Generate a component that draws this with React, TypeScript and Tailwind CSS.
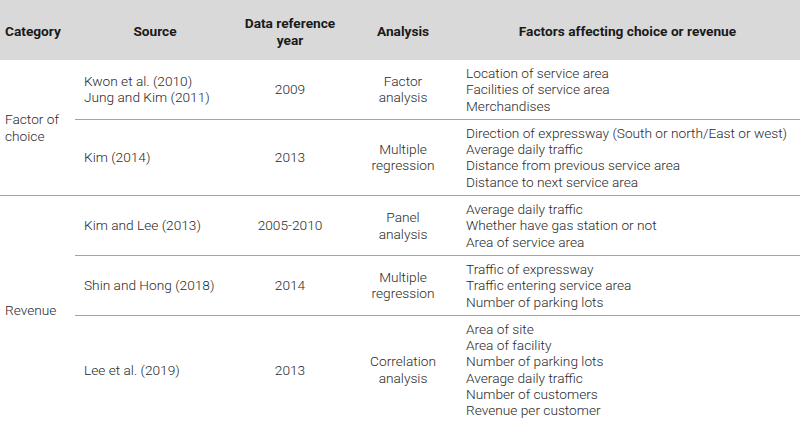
import React from 'react'

const groups = [
    {
        category: ["Factor of", "choice"],
        rows: [
            { source: ["Kwon et al. (2010)", "Jung and Kim (2011)"], year: "2009", analysis: ["Factor", "analysis"], factors: ["Location of service area", "Facilities of service area", "Merchandises"] },
            { source: ["Kim (2014)"], year: "2013", analysis: ["Multiple", "regression"], factors: ["Direction of expressway (South or north/East or west)", "Average daily traffic", "Distance from previous service area", "Distance to next service area"] },
        ],
    },
    {
        category: ["Revenue"],
        rows: [
            { source: ["Kim and Lee (2013)"], year: "2005-2010", analysis: ["Panel", "analysis"], factors: ["Average daily traffic", "Whether have gas station or not", "Area of service area"] },
            { source: ["Shin and Hong (2018)"], year: "2014", analysis: ["Multiple", "regression"], factors: ["Traffic of expressway", "Traffic entering service area", "Number of parking lots"] },
            { source: ["Lee et al. (2019)"], year: "2013", analysis: ["Correlation", "analysis"], factors: ["Area of site", "Area of facility", "Number of parking lots", "Average daily traffic", "Number of customers", "Revenue per customer"] },
        ],
    },
]

function Lines({ items }: { items: string[] }) {
    return <>{items.map((t, i) => <div key={i}>{t}</div>)}</>
}

export default function App() {
    return (
        <div className="w-[800px] h-[422px] bg-white font-['Roboto',sans-serif] text-[13.7px] leading-[16.3px]">
            <table className="w-full border-collapse table-fixed">
                <colgroup>
                    <col className="w-[75px]" />
                    <col className="w-[160px]" />
                    <col className="w-[110px]" />
                    <col className="w-[116px]" />
                    <col />
                </colgroup>
                <thead>
                    <tr className="bg-[#d9d9d9] h-[60px] font-bold text-[#1a1a1a] leading-[17px]">
                        <th className="text-left pl-[5px] pt-[2px] font-bold">Category</th>
                        <th className="text-center pt-[2px] font-bold">Source</th>
                        <th className="text-center pt-[3px] font-bold">Data reference<br />year</th>
                        <th className="text-center pt-[2px] font-bold">Analysis</th>
                        <th className="text-center pt-[2px] font-bold pr-[6px]">Factors affecting choice or revenue</th>
                    </tr>
                </thead>
                <tbody className="font-light text-[#2a2a2a]">
                    {groups.map((g, gi) =>
                        g.rows.map((r, ri) => {
                            const last = ri === g.rows.length - 1
                            const lastAll = last && gi === groups.length - 1
                            const border = lastAll
                                ? "border-b-[1.5px] border-[#333]"
                                : "border-b border-[#a3a3a3]"
                            return (
                                <tr key={gi + "-" + ri}>
                                    {ri === 0 && (
                                        <td
                                            rowSpan={g.rows.length}
                                            className={"pl-[5px] align-middle " + (gi === groups.length - 1 ? "border-b-[1.5px] border-[#333]" : "border-b border-[#a3a3a3]")}
                                        >
                                            <Lines items={g.category} />
                                        </td>
                                    )}
                                    <td className={"pl-[9px] py-[5px] align-middle " + border}><Lines items={r.source} /></td>
                                    <td className={"text-center align-middle " + border}>{r.year}</td>
                                    <td className={"text-center align-middle " + border}><Lines items={r.analysis} /></td>
                                    <td className={"pl-[5px] py-[5px] align-middle " + border}><Lines items={r.factors} /></td>
                                </tr>
                            )
                        })
                    )}
                </tbody>
            </table>
        </div>
    )
}
